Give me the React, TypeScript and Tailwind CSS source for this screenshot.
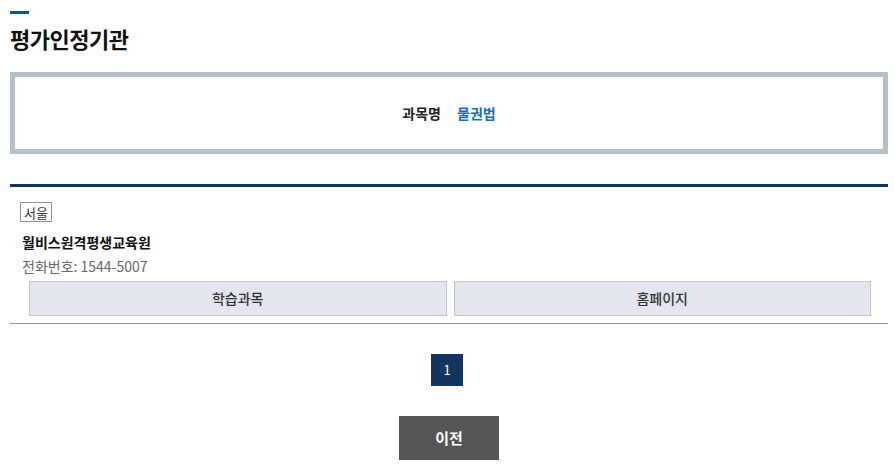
export default function App() {
  return (
    <div className="w-[894px] h-[468px] bg-white overflow-hidden px-[10px] pt-[11px] font-['Noto_Sans_CJK_KR','Noto_Sans',sans-serif] text-[#222]">
      {/* title */}
      <div className="w-[19px] h-[3px] bg-[#0b5a8c]" />
      <h2 className="mt-[10px] text-[22px] leading-[28px] font-bold text-[#111] tracking-[-0.5px]">평가인정기관</h2>

      {/* subject box */}
      <div className="mt-[20px] w-[878px] h-[82px] border-[5px] border-[#b8bfcc] flex items-center justify-center gap-[16px] text-[14px] font-bold">
        <span className="text-[#222]">과목명</span>
        <span className="text-[#1b6fb5]">물권법</span>
      </div>

      {/* list */}
      <div className="mt-[30px] w-[878px] border-t-[3px] border-[#12365f] border-b border-b-[#999]">
        <div className="pl-[10px] pt-[15px] pb-[7px]">
          <div className="flex">
            <span className="flex items-center justify-center h-[20px] px-[3px] border border-[#8a9099] text-[13px] leading-none text-[#333]">서울</span>
          </div>
          <p className="mt-[10px] pl-[2px] text-[14px] leading-[20px] font-bold text-[#111]">월비스원격평생교육원</p>
          <p className="mt-[4px] pl-[2px] text-[14px] leading-[20px] text-[#666]">전화번호: 1544-5007</p>
          <div className="mt-[5px] ml-[9px] mr-[17px] grid grid-cols-2 gap-[7px]">
            <button className="h-[35px] bg-[#e3e6ee] border border-[#c2c5cc] text-[14px] font-medium text-[#333]">학습과목</button>
            <button className="h-[35px] bg-[#e3e6ee] border border-[#c2c5cc] text-[14px] font-medium text-[#333]">홈페이지</button>
          </div>
        </div>
      </div>

      {/* pagination */}
      <div className="mt-[30px] flex justify-center">
        <span className="w-[32px] h-[32px] bg-[#12365f] text-white text-[13px] flex items-center justify-center">1</span>
      </div>

      <div className="mt-[30px] pl-[4px] flex justify-center">
        <button className="w-[100px] h-[44px] bg-[#555] text-white text-[15px] font-bold">이전</button>
      </div>
    </div>
  );
}
